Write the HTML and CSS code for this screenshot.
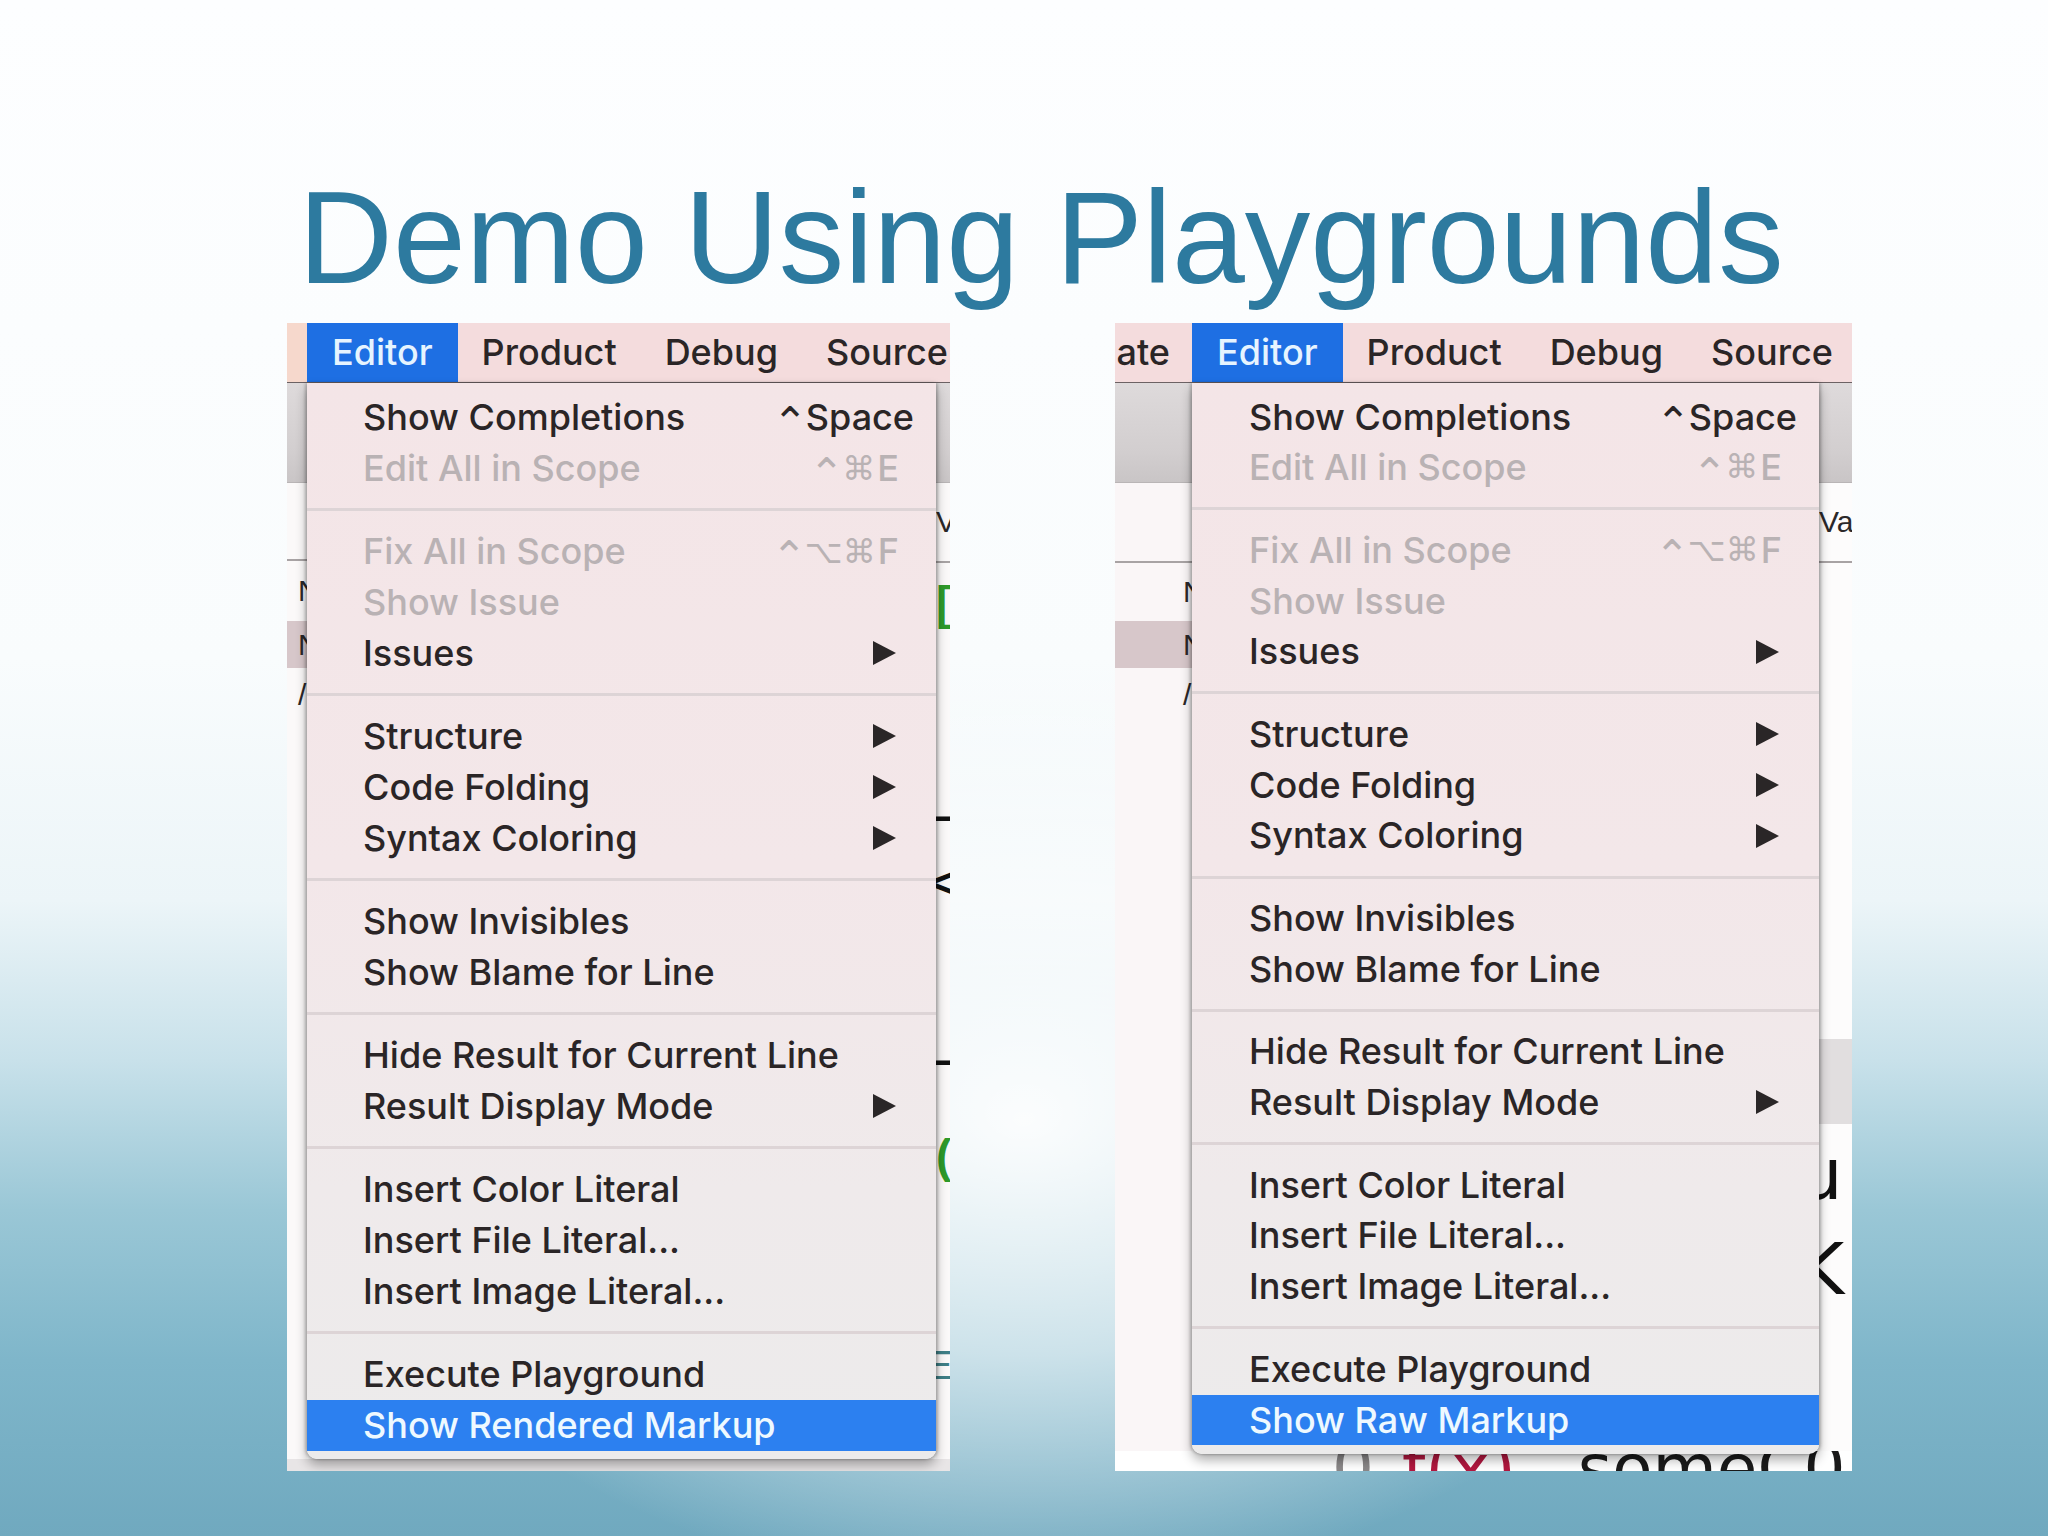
FILE: index.html
```html
<!DOCTYPE html>
<html>
<head>
<meta charset="utf-8">
<title>Demo Using Playgrounds</title>
<link rel="stylesheet" href="styles.css">
</head>
<body>
<div class="slide">
  <h1 class="title">Demo Using Playgrounds</h1>
  <div class="shots">
    <!-- LEFT SCREENSHOT -->
    <div class="shot shot-l">
      <div class="menubar">
        <div class="mb-edge"></div>
        <div class="mb-item active">Editor</div>
        <div class="mb-item">Product</div>
        <div class="mb-item">Debug</div>
        <div class="mb-item">Source</div>
      </div>
      <div class="win">
        <div class="win-top">
          <div class="strip strip-ll">
            <div class="tbar"></div>
            <div class="blank h76"></div>
            <div class="rule"></div>
            <div class="grow g60"><span class="gl">N</span></div>
            <div class="band b47"><span class="gl">N</span></div>
            <div class="grow g53"><span class="gl">/</span></div>
            <div class="fill"></div>
          </div>
          <div class="mid"></div>
          <div class="strip strip-lr">
            <div class="tbar"></div>
            <div class="grow g78"><span class="gr">V</span></div>
            <div class="rule"></div>
            <div class="grow g80"><span class="gr green">[i</span></div>
            <div class="blank h143"></div>
            <div class="grow g60"><span class="gr bold">–</span></div>
            <div class="grow g74"><span class="gr bold">&lt;</span></div>
            <div class="blank h110"></div>
            <div class="grow g60"><span class="gr bold">–</span></div>
            <div class="blank h36"></div>
            <div class="grow g60"><span class="gr green">(</span></div>
            <div class="blank h149"></div>
            <div class="grow g60"><span class="gr teal">E</span></div>
            <div class="fill"></div>
          </div>
        </div>
        <div class="foot-l"></div>
      </div>
      <div class="menu">
        <div class="mi"><span>Show Completions</span><span class="key wide"><span class="caret">⌃</span>Space</span></div>
        <div class="mi dis"><span>Edit All in Scope</span><span class="key"><span class="caret">⌃</span><span class="sym">⌘</span>E</span></div>
        <div class="sep"></div>
        <div class="mi dis"><span>Fix All in Scope</span><span class="key"><span class="caret">⌃</span><span class="sym">⌥⌘</span>F</span></div>
        <div class="mi dis"><span>Show Issue</span></div>
        <div class="mi"><span>Issues</span><span class="arrow"></span></div>
        <div class="sep"></div>
        <div class="mi"><span>Structure</span><span class="arrow"></span></div>
        <div class="mi"><span>Code Folding</span><span class="arrow"></span></div>
        <div class="mi"><span>Syntax Coloring</span><span class="arrow"></span></div>
        <div class="sep"></div>
        <div class="mi"><span>Show Invisibles</span></div>
        <div class="mi"><span>Show Blame for Line</span></div>
        <div class="sep"></div>
        <div class="mi"><span>Hide Result for Current Line</span></div>
        <div class="mi"><span>Result Display Mode</span><span class="arrow"></span></div>
        <div class="sep"></div>
        <div class="mi"><span>Insert Color Literal</span></div>
        <div class="mi"><span>Insert File Literal...</span></div>
        <div class="mi"><span>Insert Image Literal...</span></div>
        <div class="sep"></div>
        <div class="mi"><span>Execute Playground</span></div>
        <div class="mi sel"><span>Show Rendered Markup</span></div>
      </div>
    </div>

    <!-- RIGHT SCREENSHOT -->
    <div class="shot shot-r">
      <div class="menubar">
        <div class="mb-item mb-cut">ate</div>
        <div class="mb-item active">Editor</div>
        <div class="mb-item">Product</div>
        <div class="mb-item">Debug</div>
        <div class="mb-item">Source</div>
      </div>
      <div class="win">
        <div class="win-top">
          <div class="strip strip-rl">
            <div class="tbar"></div>
            <div class="blank h78"></div>
            <div class="rule"></div>
            <div class="grow g58"><span class="gl2">N</span></div>
            <div class="band b47"><span class="gl2">N</span></div>
            <div class="grow g53"><span class="gl2">/</span></div>
            <div class="fill"></div>
          </div>
          <div class="mid"></div>
          <div class="strip strip-rr">
            <div class="tbar"></div>
            <div class="grow g78"><span class="gr">Va</span></div>
            <div class="rule"></div>
            <div class="blank h476"></div>
            <div class="band2"></div>
            <div class="grow g100"><span class="big">u</span></div>
            <div class="grow g90"><span class="big">K</span></div>
            <div class="fill"></div>
          </div>
        </div>
        <div class="codeline"><span class="c-gray">0</span><span class="c-red">f(x)</span><span class="c-dark">someC0</span></div>
      </div>
      <div class="menu">
        <div class="mi"><span>Show Completions</span><span class="key wide"><span class="caret">⌃</span>Space</span></div>
        <div class="mi dis"><span>Edit All in Scope</span><span class="key"><span class="caret">⌃</span><span class="sym">⌘</span>E</span></div>
        <div class="sep"></div>
        <div class="mi dis"><span>Fix All in Scope</span><span class="key"><span class="caret">⌃</span><span class="sym">⌥⌘</span>F</span></div>
        <div class="mi dis"><span>Show Issue</span></div>
        <div class="mi"><span>Issues</span><span class="arrow"></span></div>
        <div class="sep"></div>
        <div class="mi"><span>Structure</span><span class="arrow"></span></div>
        <div class="mi"><span>Code Folding</span><span class="arrow"></span></div>
        <div class="mi"><span>Syntax Coloring</span><span class="arrow"></span></div>
        <div class="sep"></div>
        <div class="mi"><span>Show Invisibles</span></div>
        <div class="mi"><span>Show Blame for Line</span></div>
        <div class="sep"></div>
        <div class="mi"><span>Hide Result for Current Line</span></div>
        <div class="mi"><span>Result Display Mode</span><span class="arrow"></span></div>
        <div class="sep"></div>
        <div class="mi"><span>Insert Color Literal</span></div>
        <div class="mi"><span>Insert File Literal...</span></div>
        <div class="mi"><span>Insert Image Literal...</span></div>
        <div class="sep"></div>
        <div class="mi"><span>Execute Playground</span></div>
        <div class="mi sel"><span>Show Raw Markup</span></div>
      </div>
    </div>
  </div>
</div>
</body>
</html>
```
FILE: styles.css
```css
* { box-sizing: border-box; }
html, body { margin: 0; padding: 0; }
body {
  width: 2048px;
  height: 1536px;
  overflow: hidden;
  font-family: "Liberation Sans", Arial, sans-serif;
}

.slide {
  width: 2048px;
  height: 1536px;
  padding-top: 173px;
  background:
    radial-gradient(ellipse 700px 470px at 1024px 1120px, rgba(255,255,255,0.95) 0%, rgba(255,255,255,0.6) 50%, rgba(255,255,255,0) 100%),
    linear-gradient(180deg, #fdfeff 0px, #f9fcfd 660px, #ecf5f8 900px, #c8e1ea 1060px, #9ac7d6 1210px, #7fb6ca 1360px, #70a9bf 1536px);
}

.title {
  margin: 0;
  padding-left: 34px;
  font-family: "Liberation Sans", Arial, sans-serif;
  font-weight: 400;
  font-size: 131px;
  line-height: 130px;
  color: #2d7a9f;
  text-align: center;
}

.shots {
  display: flex;
  gap: 165px;
  margin-top: 20px;
  padding-left: 287px;
}

.shot {
  position: relative;
  flex: none;
  height: 1148px;
  overflow: hidden;
  display: flex;
  flex-direction: column;
  font-family: Inter, "Noto Sans", "DejaVu Sans", sans-serif;
  background: #f3f0f1;
}
.shot-l { width: 663px; }
.shot-r { width: 737px; }

/* ---------- menu bar ---------- */
.menubar {
  flex: none;
  height: 60px;
  display: flex;
  overflow: hidden;
  background: #f4dcdd;
  border-bottom: 1px solid #6c6264;
  font-size: 36px;
  font-weight: 500;
  color: #2a2526;
}
.mb-edge { flex: none; width: 20px; background: #f6d8cc; }
.mb-item {
  flex: none;
  padding: 0 24px;
  line-height: 59px;
  white-space: nowrap;
}
.mb-item.active { background: #1e6fe3; color: #e6f4ff; padding: 0 25px; }
.mb-cut {
  width: 77px;
  padding: 0 22px 0 0;
  display: flex;
  justify-content: flex-end;
  overflow: hidden;
}

/* ---------- window content beneath the menu ---------- */
.win {
  flex: 1;
  display: flex;
  flex-direction: column;
  min-height: 0;
}
.win-top {
  flex: 1;
  display: flex;
  min-height: 0;
}
.mid { flex: 1; background: #ffffff; }
.strip {
  flex: none;
  display: flex;
  flex-direction: column;
  overflow: hidden;
  background: #fbf9f9;
}
.strip-ll { width: 20px; }
.strip-lr { width: 14px; }
.strip-rl { width: 77px; background: #faf6f7; }
.strip-rr { width: 33px; background: #fdfcfc; }

.tbar {
  flex: none;
  height: 100px;
  background: linear-gradient(180deg, #dedadb 0%, #d2cecf 70%, #c9c5c6 100%);
  border-bottom: 1px solid #b9b5b6;
}
.blank { flex: none; }
.h36 { height: 36px; }
.h76 { height: 76px; }
.h78 { height: 78px; }
.h110 { height: 110px; }
.h143 { height: 143px; }
.h149 { height: 149px; }
.h476 { height: 476px; }
.rule { flex: none; height: 2px; background: #a8a3a4; }
.grow {
  flex: none;
  display: flex;
  align-items: center;
  font-family: "Liberation Sans", Arial, sans-serif;
  font-size: 30px;
  color: #2b2829;
  white-space: nowrap;
}
.g53 { height: 53px; }
.g58 { height: 58px; }
.g60 { height: 60px; }
.g74 { height: 74px; }
.g78 { height: 78px; }
.g80 { height: 80px; }
.g90 { height: 90px; }
.g100 { height: 100px; }
.band {
  flex: none;
  display: flex;
  align-items: center;
  background: #d7c7ca;
  font-family: "Liberation Sans", Arial, sans-serif;
  font-size: 30px;
  color: #2b2829;
}
.b47 { height: 47px; }
.band2 { flex: none; height: 85px; background: #e1dedf; }
.fill { flex: 1; }
.gl { padding-left: 11px; }
.gl2 { padding-left: 68px; }
.gr { padding-left: 0; }
.green { color: #2f9a2a; font-weight: 700; font-size: 46px; }
.bold { font-weight: 700; font-size: 44px; color: #111; margin-left: -6px; }
.teal { color: #3f7f86; font-size: 40px; margin-left: -10px; }
.big {
  font-family: "DejaVu Sans", sans-serif;
  font-size: 72px;
  color: #111;
  margin-left: -22px;
}

.foot-l { flex: none; height: 12px; background: #e8e5e6; }
.codeline {
  flex: none;
  height: 20px;
  overflow: hidden;
  background: #ffffff;
  font-family: "DejaVu Sans", sans-serif;
  font-size: 66px;
  line-height: 30px;
  white-space: nowrap;
}
.codeline span { display: inline-block; position: relative; top: 3px; vertical-align: top; line-height: 30px; }
.c-gray { color: #8a8788; margin-left: 217px; }
.c-red { color: #b2173f; margin-left: 28px; }
.c-dark { color: #1a1a1a; margin-left: 62px; }

/* ---------- dropdown menu (overlay) ---------- */
.menu {
  position: absolute;
  top: 60px;
  width: 629px;
  padding: 8.5px 0;
  background: linear-gradient(180deg, #f4e5e7 0%, #f3e7e9 45%, #efeaeb 75%, #ecebeb 100%);
  border-radius: 0 0 10px 10px;
  box-shadow: 0 6px 12px rgba(0,0,0,0.32), -2px 0 3px rgba(0,0,0,0.2), 2px 0 3px rgba(0,0,0,0.22);
  font-size: 36px;
  font-weight: 500;
  color: #2a2526;
}
.shot-l .menu { left: 20px; }
.shot-r .menu { left: 77px; width: 627px; }

.mi {
  height: 51px;
  line-height: 51px;
  display: flex;
  justify-content: space-between;
  align-items: center;
  padding: 0 37px 0 56px;
  white-space: nowrap;
}
.shot-r .mi { height: 50.7px; line-height: 50.7px; padding-left: 57px; }
.mi.dis { color: #b9b2b4; }
.mi.sel { background: #2c80f0; color: #eef9ff; }
.key { display: flex; align-items: center; }
.key.wide { margin-right: -15px; }
.caret {
  font-family: "DejaVu Sans", sans-serif;
  font-weight: 400;
  font-size: 42px;
  line-height: 20px;
  margin-right: -2px;
  position: relative;
  top: 6px;
}
.sym {
  font-family: "DejaVu Sans", sans-serif;
  font-weight: 400;
  font-size: 33px;
  margin-right: 2px;
}
.arrow {
  width: 0;
  height: 0;
  border-left: 23px solid #2a2627;
  border-top: 12.5px solid transparent;
  border-bottom: 12.5px solid transparent;
  margin-right: 3px;
}
.sep {
  height: 32px;
  display: flex;
  align-items: center;
}
.sep::before {
  content: "";
  flex: 1;
  height: 3px;
  background: #ddd4d6;
}
```
